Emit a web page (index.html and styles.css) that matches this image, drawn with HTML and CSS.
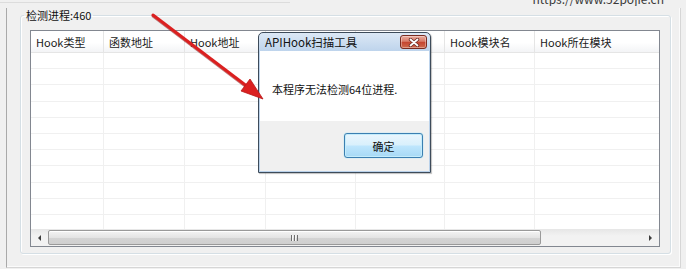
FILE: index.html
```html
<!DOCTYPE html>
<html lang="zh-CN">
<head>
    <meta charset="UTF-8">
    <title>APIHook扫描工具</title>
    <link rel="stylesheet" href="styles.css">
</head>
<body>
    <div class="top">
        <div class="topctl"></div>
        <div class="url">https://www.52pojie.cn</div>
    </div>

    <div class="frame">
        <fieldset class="group">
            <legend>检测进程:460</legend>

            <div class="listview">
                <div class="lvhead">
                    <div>Hook类型</div>
                    <div>函数地址</div>
                    <div>Hook地址</div>
                    <div></div>
                    <div></div>
                    <div>Hook模块名</div>
                    <div>Hook所在模块</div>
                </div>
                <div class="lvbody" id="lvbody"></div>
                <div class="hscroll">
                    <div class="sbbtn"><span class="arr-left"></span></div>
                    <div class="thumb"><span class="grip"></span></div>
                    <div class="track"></div>
                    <div class="sbbtn"><span class="arr-right"></span></div>
                </div>
            </div>
        </fieldset>
    </div>

    <!-- message box -->
    <div class="dialog">
        <div class="dlgtitle">
            <span>APIHook扫描工具</span>
            <div class="closebtn">
                <svg width="12" height="9" viewBox="0 0 12 9">
                    <path d="M2.5 1.5 L9.5 7.5 M9.5 1.5 L2.5 7.5" stroke="#6b2a22" stroke-width="3.4" stroke-linecap="round"/>
                    <path d="M2.5 1.5 L9.5 7.5 M9.5 1.5 L2.5 7.5" stroke="#ffffff" stroke-width="1.8" stroke-linecap="round"/>
                </svg>
            </div>
        </div>
        <div class="dlgbody">本程序无法检测64位进程.</div>
        <div class="dlgfoot">
            <button class="okbtn">确定</button>
        </div>
    </div>

    <svg class="arrow" width="686" height="269" viewBox="0 0 686 269">
        <line x1="153" y1="16" x2="248" y2="88" stroke="#8e1414" stroke-width="3" stroke-linecap="round" opacity="0.55"/>
        <line x1="153" y1="15" x2="248" y2="87" stroke="#db2020" stroke-width="3" stroke-linecap="round"/>
        <polygon points="263,99 241,91 250,79" fill="#db2020" stroke="#b81818" stroke-width="0.8"/>
    </svg>

    <script>
        function makerows(){
            let body=document.getElementById('lvbody');
            let html='';
            for(let i=0;i<11;i++){
                html+='<div class="lvrow">';
                for(let j=0;j<7;j++){
                    html+='<div></div>';
                }
                html+='</div>';
            }
            body.innerHTML=html;
        }
        makerows();
    </script>
</body>
</html>
```

FILE: styles.css
```css
body{
    margin:0;
    width:686px;
    height:269px;
    overflow:hidden;
    position:relative;
    background:#f0f0f0;
    font-family:"Noto Sans CJK SC",sans-serif;
    font-size:11px;
    color:#000;
}

.top{
    height:6px;
    display:flex;
    justify-content:space-between;
    overflow:hidden;
}
.topctl{
    width:290px;
    height:2px;
    border-bottom:1px solid #dcdcdc;
}
.url{
    font-size:12px;
    line-height:12px;
    margin-top:-7px;
    margin-right:22px;
    color:#3a3a3a;
}

.frame{
    margin-left:6px;
    width:675px;
    height:260px;
    box-sizing:border-box;
    border-left:1px solid #a9a9a9;
    border-right:1px solid #d6d6d6;
    border-bottom:1px solid #d6d6d6;
    box-shadow:inset -1px -1px 0 #fbfbfb;
}

.group{
    margin:2px 0 0 13px;
    width:651px;
    height:246px;
    box-sizing:border-box;
    padding:8px 10px 6px 9px;
    border:1px solid #d5dfe5;
    border-radius:3px;
    box-shadow:inset 1px 1px 0 #fff,1px 1px 0 #fff;
}
.group legend{
    padding:0 2px;
    margin-left:-6px;
    line-height:14px;
    font-size:11px;
    color:#111;
}

.listview{
    height:217px;
    box-sizing:border-box;
    border:1px solid #828790;
    background:#fff;
    display:flex;
    flex-direction:column;
}

.lvhead,.lvrow{
    display:grid;
    grid-template-columns:73px 81px 81px 90px 89px 90px 124px;
}
.lvhead{
    height:22px;
    box-sizing:border-box;
    border-bottom:1px solid #e5e5e5;
    background:linear-gradient(#ffffff 55%,#f3f4f6);
}
.lvhead div{
    border-right:1px solid #e5e5e5;
    padding:2px 0 0 5px;
    line-height:19px;
    color:#1a1a1a;
    white-space:nowrap;
    overflow:hidden;
}
.lvbody{
    height:176px;
    overflow:hidden;
}
.lvrow{
    height:16.2px;
    box-sizing:border-box;
    border-bottom:1px solid #f0f0f0;
}
.lvrow div{
    border-right:1px solid #f0f0f0;
}
.lvhead div:last-child,.lvrow div:last-child{
    border-right:none;
}

.hscroll{
    height:17px;
    display:flex;
    background:linear-gradient(#e6e6e6,#f2f2f2 40%,#f2f2f2);
}
.sbbtn{
    width:17px;
    display:flex;
    align-items:center;
    justify-content:center;
}
.arr-left{
    width:0;
    height:0;
    border-top:3px solid transparent;
    border-bottom:3px solid transparent;
    border-right:3px solid #3c3c3c;
}
.arr-right{
    width:0;
    height:0;
    border-top:3px solid transparent;
    border-bottom:3px solid transparent;
    border-left:3px solid #3c3c3c;
}
.thumb{
    width:493px;
    margin:1px 0;
    box-sizing:border-box;
    border:1px solid #9a9a9a;
    border-radius:2px;
    background:linear-gradient(#f4f4f4,#e4e4e4 50%,#d4d4d4 51%,#cfcfcf);
    box-shadow:inset 0 1px 0 #fff;
    display:flex;
    align-items:center;
    justify-content:center;
}
.grip{
    width:7px;
    height:6px;
    background:repeating-linear-gradient(90deg,#6f6f6f 0 1px,#f8f8f8 1px 2px,transparent 2px 3px);
}
.track{
    flex:1;
}

.dialog{
    position:absolute;
    left:258px;
    top:32px;
    width:173px;
    height:141px;
    box-sizing:border-box;
    border:1px solid #3d4b5a;
    border-radius:5px 5px 0 0;
    padding:0 1px 1px;
    background:linear-gradient(#dce8f5,#bed4ec 18px,#b9d1ea);
    box-shadow:1px 1px 1px rgba(0,0,0,0.25);
    display:flex;
    flex-direction:column;
}
.dlgtitle{
    height:18px;
    display:flex;
    justify-content:space-between;
    padding:0 2px 0 5px;
}
.dlgtitle span{
    font-size:11.5px;
    line-height:18px;
    color:#111;
}
.closebtn{
    width:27px;
    height:14px;
    margin-top:2px;
    box-sizing:border-box;
    border:1px solid #7a2b20;
    border-radius:3px;
    background:linear-gradient(#e9ab9e,#d77a68 45%,#c4432f 50%,#cf6a4e);
    box-shadow:inset 0 0 0 1px rgba(255,255,255,0.35);
    display:flex;
    align-items:center;
    justify-content:center;
}
.dlgbody{
    height:70px;
    box-sizing:border-box;
    background:#fff;
    padding:30px 0 0 12px;
    line-height:16px;
    color:#111;
}
.dlgfoot{
    flex:1;
    background:#f0f0f0;
    display:flex;
    justify-content:flex-end;
    align-items:flex-start;
    padding:12px 6px 0 0;
}
.okbtn{
    width:79px;
    height:25px;
    border:1px solid #3c7fb1;
    border-radius:3px;
    background:linear-gradient(#eaf6fd,#d9f0fc 48%,#bee6fd 52%,#a7d9f5);
    box-shadow:inset 0 0 0 1px #c4ecfb,0 0 1px #48d0f8;
    font-family:"Noto Sans CJK SC",sans-serif;
    font-size:11px;
    color:#111;
    padding:0;
}

.arrow{
    position:absolute;
    left:0;
    top:0;
    pointer-events:none;
}
```
